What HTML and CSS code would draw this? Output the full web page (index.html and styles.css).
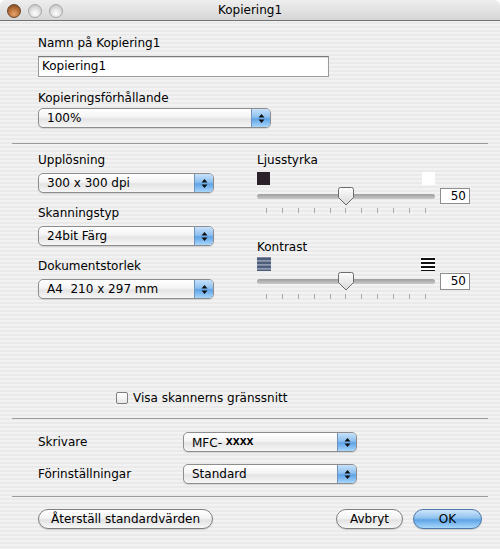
FILE: index.html
```html
<!DOCTYPE html>
<html>
<head>
<meta charset="utf-8">
<link rel="stylesheet" href="styles.css">
</head>
<body>
<div class="window">
  <div class="titlebar">
    <div class="lights">
      <span class="light close"></span>
      <span class="light"></span>
      <span class="light"></span>
    </div>
    <div class="title">Kopiering1</div>
  </div>

  <section class="top">
    <div class="label">Namn på Kopiering1</div>
    <div class="textfield">Kopiering1</div>
    <div class="label label-gap">Kopieringsförhållande</div>
    <div class="popup popup-ratio">
      <span class="ptext">100%</span>
      <span class="parrows"><svg width="7" height="11" viewBox="0 0 7 11"><path d="M3.5 1 L6.5 4.5 H0.5 Z M0.5 6.5 H6.5 L3.5 10 Z" fill="#111"/></svg></span>
    </div>
  </section>

  <hr class="sep">

  <section class="middle">
    <div class="col-left">
      <div class="label">Upplösning</div>
      <div class="popup popup-left">
        <span class="ptext">300 x 300 dpi</span>
        <span class="parrows"><svg width="7" height="11" viewBox="0 0 7 11"><path d="M3.5 1 L6.5 4.5 H0.5 Z M0.5 6.5 H6.5 L3.5 10 Z" fill="#111"/></svg></span>
      </div>
      <div class="label label-gap">Skanningstyp</div>
      <div class="popup popup-left">
        <span class="ptext">24bit Färg</span>
        <span class="parrows"><svg width="7" height="11" viewBox="0 0 7 11"><path d="M3.5 1 L6.5 4.5 H0.5 Z M0.5 6.5 H6.5 L3.5 10 Z" fill="#111"/></svg></span>
      </div>
      <div class="label label-gap">Dokumentstorlek</div>
      <div class="popup popup-left">
        <span class="ptext">A4&nbsp;&nbsp;210 x 297 mm</span>
        <span class="parrows"><svg width="7" height="11" viewBox="0 0 7 11"><path d="M3.5 1 L6.5 4.5 H0.5 Z M0.5 6.5 H6.5 L3.5 10 Z" fill="#111"/></svg></span>
      </div>
    </div>

    <div class="col-right">
      <div class="label">Ljusstyrka</div>
      <div class="icons-row">
        <span class="sq sq-dark"></span>
        <span class="sq sq-light"></span>
      </div>
      <div class="slider-row">
        <div class="track">
          <svg class="thumb" width="18" height="19" viewBox="0 0 18 19">
            <defs><linearGradient id="tg1" x1="0" y1="0" x2="0" y2="1"><stop offset="0" stop-color="#fdfdfd"/><stop offset="1" stop-color="#d8d8d8"/></linearGradient></defs>
            <path d="M1.5 2.5 Q1.5 0.5 3.5 0.5 H14.5 Q16.5 0.5 16.5 2.5 V10.5 L9 18 L1.5 10.5 Z" fill="url(#tg1)" stroke="#6b6b6b" stroke-width="1"/>
          </svg>
        </div>
        <div class="valbox">50</div>
      </div>
      <div class="ticks"><i></i><i></i><i></i><i></i><i></i><i></i><i></i><i></i><i></i><i></i><i></i></div>

      <div class="label label-kontrast">Kontrast</div>
      <div class="icons-row icons-row2">
        <span class="lines lines-low"></span>
        <span class="lines lines-high"></span>
      </div>
      <div class="slider-row slider-row2">
        <div class="track">
          <svg class="thumb" width="18" height="19" viewBox="0 0 18 19">
            <defs><linearGradient id="tg2" x1="0" y1="0" x2="0" y2="1"><stop offset="0" stop-color="#fdfdfd"/><stop offset="1" stop-color="#d8d8d8"/></linearGradient></defs>
            <path d="M1.5 2.5 Q1.5 0.5 3.5 0.5 H14.5 Q16.5 0.5 16.5 2.5 V10.5 L9 18 L1.5 10.5 Z" fill="url(#tg2)" stroke="#6b6b6b" stroke-width="1"/>
          </svg>
        </div>
        <div class="valbox">50</div>
      </div>
      <div class="ticks"><i></i><i></i><i></i><i></i><i></i><i></i><i></i><i></i><i></i><i></i><i></i></div>
    </div>
  </section>

  <div class="check-row">
    <span class="checkbox"></span>
    <span class="check-label">Visa skannerns gränssnitt</span>
  </div>

  <hr class="sep">

  <div class="form-rows">
    <div class="form-row">
      <span class="form-label">Skrivare</span>
      <div class="popup popup-form">
        <span class="ptext">MFC- <span class="xxxx">XXXX</span></span>
        <span class="parrows"><svg width="7" height="11" viewBox="0 0 7 11"><path d="M3.5 1 L6.5 4.5 H0.5 Z M0.5 6.5 H6.5 L3.5 10 Z" fill="#111"/></svg></span>
      </div>
    </div>
    <div class="form-row">
      <span class="form-label">Förinställningar</span>
      <div class="popup popup-form">
        <span class="ptext">Standard</span>
        <span class="parrows"><svg width="7" height="11" viewBox="0 0 7 11"><path d="M3.5 1 L6.5 4.5 H0.5 Z M0.5 6.5 H6.5 L3.5 10 Z" fill="#111"/></svg></span>
      </div>
    </div>
  </div>

  <hr class="sep sep-bottom">

  <div class="buttons">
    <button class="btn btn-reset">Återställ standardvärden</button>
    <div class="btn-group">
      <button class="btn btn-cancel">Avbryt</button>
      <button class="btn btn-ok">OK</button>
    </div>
  </div>
</div>
</body>
</html>
```

FILE: styles.css
```css
* { box-sizing: border-box; }

html, body {
  margin: 0;
  padding: 0;
  background: #ffffff;
}

body {
  font-family: "DejaVu Sans", "Lucida Grande", sans-serif;
  font-size: 12px;
  color: #000;
}

.window {
  width: 500px;
  height: 549px;
  overflow: hidden;
  border-radius: 6px 6px 0 0;
  background: repeating-linear-gradient(to bottom, #f2f2f2 0, #f2f2f2 2px, #eaeaea 2px, #eaeaea 4px);
}

.titlebar {
  height: 21px;
  position: relative;
  display: flex;
  align-items: center;
  justify-content: center;
  background: linear-gradient(to bottom, #eeeeee, #d6d6d6);
  border-bottom: 1px solid #727272;
}

.lights {
  position: absolute;
  left: 7px;
  top: 4px;
  display: flex;
  gap: 7px;
}

.light {
  width: 14px;
  height: 14px;
  border-radius: 50%;
  border: 1px solid #a7a7a7;
  background: radial-gradient(circle at 50% 70%, #ffffff 0, #e2e2e2 45%, #b8b8b8 100%);
}

.light.close {
  border-color: #6b4527;
  background: radial-gradient(circle at 50% 75%, #e7a56a 0, #b86f3a 50%, #6e3f1f 100%);
}

.title {
  font-size: 12px;
  line-height: 20px;
  color: #000;
}

.label {
  line-height: 16px;
  height: 16px;
  white-space: nowrap;
}

.top {
  padding: 14px 0 0 38px;
}

.textfield {
  margin-top: 5px;
  width: 291px;
  height: 21px;
  background: #fff;
  border: 1px solid #9a9a9a;
  border-top-color: #7a7a7a;
  box-shadow: inset 0 1px 1px rgba(0,0,0,0.15);
  padding-left: 3px;
  line-height: 19px;
}

.top .label-gap { margin-top: 13px; }

.popup {
  height: 20px;
  display: flex;
  align-items: stretch;
  border: 1px solid #8d8d8d;
  border-radius: 5px;
  background: linear-gradient(to bottom, #ffffff 0%, #f4f4f4 45%, #e4e4e4 55%, #f6f6f6 100%);
  overflow: hidden;
  box-shadow: 0 1px 1px rgba(0,0,0,0.12);
}

.ptext {
  flex: 1;
  padding-left: 8px;
  line-height: 18px;
  white-space: nowrap;
}

.parrows {
  width: 19px;
  display: flex;
  align-items: center;
  justify-content: center;
  border-left: 1px solid #6e93bd;
  background: linear-gradient(to bottom, #c6e1fa 0%, #8ec0ef 45%, #5fa3e6 55%, #a8d6fb 100%);
}

.popup-ratio {
  margin-top: 2px;
  width: 233px;
}

.sep {
  margin: 15px 12px 0 12px;
  border: 0;
  height: 1px;
  background: #9c9c9c;
}

.middle {
  margin-top: 8px;
  padding-left: 38px;
  display: flex;
  gap: 43px;
}

.col-left { width: 176px; }

.col-left .popup { margin-top: 5px; }
.col-left .label-gap { margin-top: 12px; }

.popup-left { width: 176px; }

.col-right { width: 213px; }

.icons-row {
  margin-top: 4px;
  width: 178px;
  display: flex;
  justify-content: space-between;
}

.sq {
  width: 13px;
  height: 13px;
}

.sq-dark { background: #2a2228; }
.sq-light { background: #ffffff; }

.slider-row {
  margin-top: 3px;
  height: 16px;
  display: flex;
  align-items: center;
  gap: 5px;
}

.track {
  position: relative;
  width: 178px;
  height: 5px;
  border-radius: 3px;
  background: linear-gradient(to bottom, #9e9e9e, #c9c9c9);
}

.thumb {
  position: absolute;
  left: 80px;
  top: -7px;
}

.valbox {
  width: 30px;
  height: 16px;
  background: #fff;
  border: 1px solid #8e8e8e;
  text-align: right;
  padding-right: 3px;
  line-height: 14px;
}

.ticks {
  margin-top: 4px;
  width: 178px;
  padding: 0 9px 0 9px;
  display: flex;
  justify-content: space-between;
}

.ticks i {
  display: block;
  width: 1px;
  height: 5px;
  background: #a9a9a9;
}

.label-kontrast { margin-top: 26px; }

.icons-row2 { margin-top: 2px; }

.lines {
  width: 14px;
  height: 14px;
}

.lines-low {
  background: repeating-linear-gradient(to bottom, #7d8aa1 0, #7d8aa1 1px, #4d5d7c 1px, #4d5d7c 3px, #8e9ab0 3px, #8e9ab0 4px);
}

.lines-high {
  background: repeating-linear-gradient(to bottom, #ffffff 0, #ffffff 1px, #111111 1px, #111111 3px, #ffffff 3px, #ffffff 4px);
}

.slider-row2 {
  margin-top: 2px;
  height: 17px;
}

.slider-row2 .valbox { height: 17px; line-height: 15px; }

.check-row {
  margin-top: 91px;
  padding-left: 116px;
  display: flex;
  align-items: center;
  gap: 5px;
  height: 16px;
}

.checkbox {
  width: 12px;
  height: 12px;
  border: 1px solid #7d7d7d;
  border-radius: 2px;
  background: linear-gradient(to bottom, #ffffff, #e8e8e8);
}

.check-label { line-height: 16px; }

.check-row + .sep { margin-top: 12px; }

.form-rows {
  margin-top: 13px;
  padding-left: 38px;
  display: flex;
  flex-direction: column;
  gap: 12px;
}

.form-row {
  display: flex;
  align-items: center;
}

.form-label {
  width: 145px;
  white-space: nowrap;
}

.popup-form { width: 174px; }

.xxxx {
  font-size: 9px;
  font-weight: bold;
  vertical-align: 2px;
}

.sep-bottom { margin-top: 12px; }

.buttons {
  margin-top: 12px;
  padding: 0 18px 0 38px;
  display: flex;
  justify-content: space-between;
}

.btn-group {
  display: flex;
  gap: 10px;
}

.btn {
  height: 20px;
  padding: 0;
  border: 1px solid #7f7f7f;
  border-radius: 10px;
  font-family: "DejaVu Sans", "Lucida Grande", sans-serif;
  font-size: 12px;
  color: #000;
  line-height: 18px;
  background: linear-gradient(to bottom, #ffffff 0%, #f3f3f3 45%, #e2e2e2 55%, #f7f7f7 100%);
  box-shadow: 0 1px 1px rgba(0,0,0,0.15);
}

.btn-reset { width: 175px; }
.btn-cancel { width: 67px; }

.btn-ok {
  width: 69px;
  border-color: #4d77a8;
  background: linear-gradient(to bottom, #cfe6fb 0%, #8ec2f0 45%, #5ea4e6 55%, #a9d8fc 100%);
}
```
